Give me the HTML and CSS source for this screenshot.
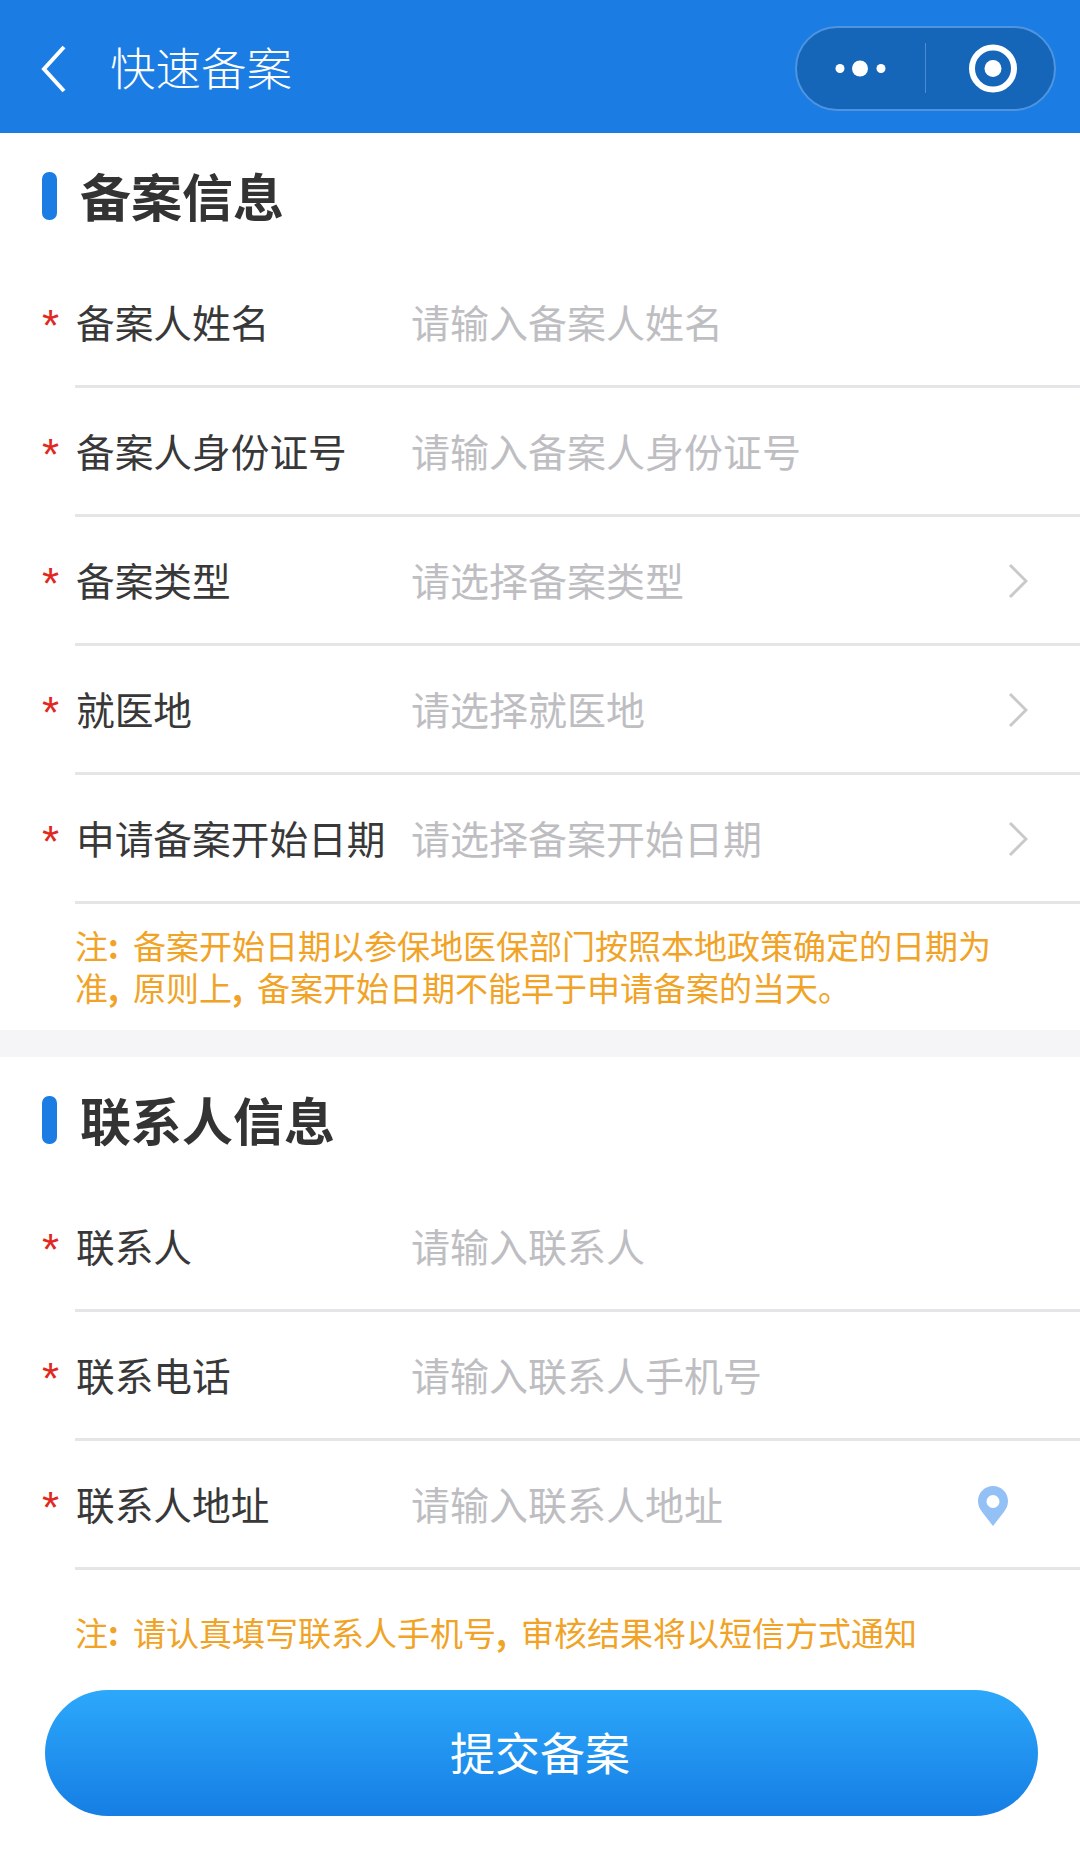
FILE: index.html
```html
<!DOCTYPE html>
<html lang="zh-CN">
<head>
<meta charset="utf-8">
<title>快速备案</title>
<link rel="stylesheet" href="styles.css">
</head>
<body>
<header class="nav">
  <svg class="back" width="26" height="48" viewBox="0 0 26 48"><path d="M23 2 3 24l20 22" fill="none" stroke="#fff" stroke-width="4"/></svg>
  <span class="nav-title">快速备案</span>
  <div class="capsule">
    <svg width="130" height="85" viewBox="0 0 130 85"><circle cx="44" cy="42.500" r="4.500" fill="#fff"/><circle cx="64" cy="42.500" r="8" fill="#fff"/><circle cx="85" cy="42.500" r="4.500" fill="#fff"/></svg>
    <span class="capsule-div"></span>
    <svg width="130" height="85" viewBox="0 0 130 85"><circle cx="68" cy="42.500" r="21" fill="none" stroke="#fff" stroke-width="6"/><circle cx="68" cy="42.500" r="8.500" fill="#fff"/></svg>
  </div>
</header>

<section class="section">
  <h2 class="heading"><span class="heading-bar"></span>备案信息</h2>
  <div class="row"><span class="star">*</span><span class="label">备案人姓名</span><span class="ph">请输入备案人姓名</span></div>
  <div class="row"><span class="star">*</span><span class="label">备案人身份证号</span><span class="ph">请输入备案人身份证号</span></div>
  <div class="row"><span class="star">*</span><span class="label">备案类型</span><span class="ph">请选择备案类型</span>
    <svg class="chev" width="20" height="36" viewBox="0 0 20 36"><path d="M2 2l16 16L2 34" fill="none" stroke="#c9c9cc" stroke-width="3"/></svg></div>
  <div class="row"><span class="star">*</span><span class="label">就医地</span><span class="ph">请选择就医地</span>
    <svg class="chev" width="20" height="36" viewBox="0 0 20 36"><path d="M2 2l16 16L2 34" fill="none" stroke="#c9c9cc" stroke-width="3"/></svg></div>
  <div class="row"><span class="star">*</span><span class="label">申请备案开始日期</span><span class="ph">请选择备案开始日期</span>
    <svg class="chev" width="20" height="36" viewBox="0 0 20 36"><path d="M2 2l16 16L2 34" fill="none" stroke="#c9c9cc" stroke-width="3"/></svg></div>
  <p class="note note-first">注<span class="punct">:</span>备案开始日期以参保地医保部门按照本地政策确定的日期为准<span class="punct">,</span>原则上<span class="punct">,</span>备案开始日期不能早于申请备案的当天。</p>
</section>

<div class="band"></div>

<section class="section">
  <h2 class="heading"><span class="heading-bar"></span>联系人信息</h2>
  <div class="row"><span class="star">*</span><span class="label">联系人</span><span class="ph">请输入联系人</span></div>
  <div class="row"><span class="star">*</span><span class="label">联系电话</span><span class="ph">请输入联系人手机号</span></div>
  <div class="row"><span class="star">*</span><span class="label">联系人地址</span><span class="ph">请输入联系人地址</span>
    <svg class="pin" width="30" height="40" viewBox="0 0 30 40"><path fill-rule="evenodd" d="M15 0C6.700 0 0 6.700 0 15c0 4.500 1.800 8 4.500 11.500L15 40l10.500-13.500C28.200 23 30 19.500 30 15 30 6.700 23.300 0 15 0zm0 9a6.500 6.500 0 1 1 0 13 6.500 6.500 0 0 1 0-13z" fill="#93c1f5"/></svg></div>
  <p class="note note-second">注<span class="punct">:</span>请认真填写联系人手机号<span class="punct">,</span>审核结果将以短信方式通知</p>
  <div class="btn-wrap"><button class="btn">提交备案</button></div>
</section>
</body>
</html>
```
FILE: styles.css
```css
* { box-sizing: border-box; }
html, body { margin: 0; padding: 0; background: #fff; }
body {
  width: 1080px;
  height: 1851px;
  overflow: hidden;
  font-family: "Noto Sans CJK SC", "Noto Sans", sans-serif;
}
.nav {
  height: 133px;
  background: #1b7de3;
  display: flex;
  align-items: center;
  padding: 0 24px 0 41px;
  color: #fff;
}
.back { flex: none; margin-top: 5px; }
.nav-title {
  font-size: 45.5px;
  line-height: 1;
  margin-left: 43px;
  margin-top: 1px;
  font-weight: 300;
}
.capsule {
  margin-left: auto;
  margin-top: 3px;
  width: 261px;
  height: 85px;
  border: 2px solid #4f94e0;
  border-radius: 43px;
  background: #1565b8;
  display: flex;
  align-items: center;
  justify-content: space-between;
}
.capsule svg { flex: none; margin: -2px -1px; }
.capsule-div { width: 1px; height: 50px; background: #4f89cf; flex: none; }
.heading {
  height: 126px;
  margin: 0;
  padding: 0 0 2px 42px;
  display: flex;
  align-items: center;
  font-size: 51px;
  font-weight: 700;
  color: #333;
  line-height: 1;
}
.heading-bar {
  width: 15px;
  height: 48px;
  border-radius: 7px;
  background: #1b7de3;
  margin: 2px 23px 0 0;
  flex: none;
}
.row {
  height: 129px;
  margin-left: 75px;
  border-bottom: 3px solid #e5e5e7;
  padding: 0 52px 2px 0;
  display: flex;
  align-items: center;
  position: relative;
  font-size: 39px;
  line-height: 1;
}
.star {
  position: absolute;
  left: -33px;
  top: 45px;
  color: #e0281e;
  font-size: 44px;
  font-weight: 400;
  font-family: "Liberation Sans", sans-serif;
}
.label { width: 336px; color: #383838; flex: none; padding-left: 1px; font-size: 38.7px; white-space: nowrap; }
.ph { color: #bebec2; flex: 1; white-space: nowrap; }
.chev { flex: none; margin-top: 4px; }
.pin { flex: none; margin: 5px 20px 0 0; }
.note {
  margin: 0;
  padding-left: 75px;
  padding-right: 80px;
  font-size: 33px;
  line-height: 42px;
  color: #f0a326;
}
.punct { display: inline-block; width: 25px; font-weight: 700; }
.note-first { height: 126px; padding-top: 20px; }
.note-second { padding-top: 41px; }
.band { height: 27px; background: #f5f5f7; }
.btn-wrap { padding: 37px 42px 0 45px; }
.btn {
  display: block;
  width: 100%;
  height: 126px;
  border: 0;
  border-radius: 63px;
  background: linear-gradient(180deg, #2ca8fb 0%, #167ee4 100%);
  color: #fff;
  font-family: inherit;
  font-size: 45px;
  padding: 0 3px 4px 0;
}
```
